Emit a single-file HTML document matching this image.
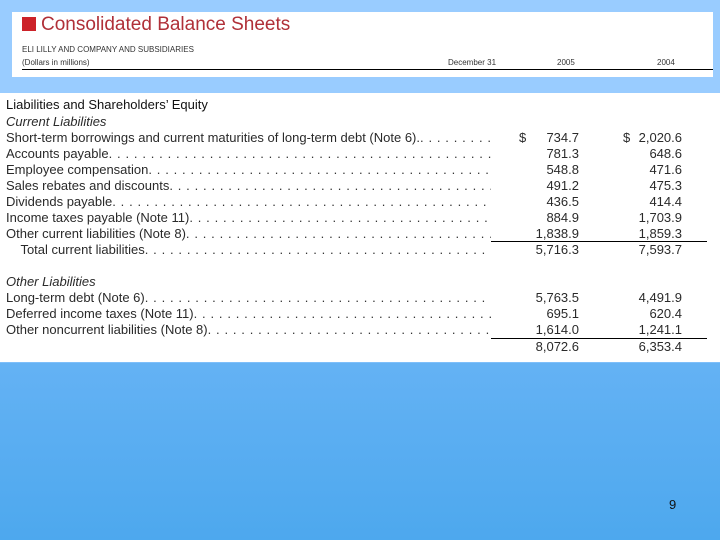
<!DOCTYPE html>
<html><head><style>
body{margin:0;width:720px;height:540px;overflow:hidden;position:relative;font-family:"Liberation Sans",sans-serif;color:#2a2a2a;
background:linear-gradient(#99ccff 0,#99ccff 362px,#64b2f4 363px,#4da8ee 540px);}
.box1{position:absolute;left:12px;top:12px;width:701px;height:65px;background:#fff}
.box2{position:absolute;left:0;top:93px;width:720px;height:269px;background:#fff}
.a{position:absolute;white-space:nowrap}
.row{position:absolute;left:6px;width:485px;display:flex;font-size:13px;height:16px;line-height:16px;white-space:nowrap}
.row .d{flex:1;overflow:hidden;letter-spacing:0.6px;color:#333}
.n{position:absolute;font-size:13px;line-height:16px;text-align:right;width:80px}
.c1{left:499px}.c2{left:602px}
.ln{position:absolute;height:1px;background:#000}
</style></head><body>
<div class="box1"></div>
<div class="box2"></div>
<div class="a" style="left:22px;top:17px;width:14px;height:14px;background:#cc2229"></div>
<div class="a" style="left:41px;top:14px;font-size:19px;color:#b03038">Consolidated Balance Sheets</div>
<div class="a" style="left:22px;top:45px;font-size:8px;color:#333">ELI LILLY AND COMPANY AND SUBSIDIARIES</div>
<div class="a" style="left:22px;top:58px;font-size:8px;color:#333">(Dollars in millions)</div>
<div class="a" style="left:448px;top:58px;font-size:8px;color:#333">December 31</div>
<div class="a" style="left:557px;top:58px;font-size:8px;color:#333">2005</div>
<div class="a" style="left:657px;top:58px;font-size:8px;color:#333">2004</div>
<div class="ln" style="left:22px;top:69px;width:691px"></div>
<div class="a" style="left:6px;top:97px;font-size:13px;color:#111">Liabilities and Shareholders’ Equity</div>
<div class="a" style="left:6px;top:114px;font-size:13px;font-style:italic">Current Liabilities</div>

<div class="row" style="top:130px"><span>Short-term borrowings and current maturities of long-term debt (Note 6).</span><span class="d">. . . . . . . . . . . . . . . . . . . . . . . . . . . . . . . . . . . . . . . . . . . . . . . . . . . . . . . . . . . . . . . . . . . . . .</span></div>
<div class="row" style="top:146px"><span>Accounts payable</span><span class="d">. . . . . . . . . . . . . . . . . . . . . . . . . . . . . . . . . . . . . . . . . . . . . . . . . . . . . . . . . . . . . . . . . . . . . . . . . . . . . . . . . . . . .</span></div>
<div class="row" style="top:162px"><span>Employee compensation</span><span class="d">. . . . . . . . . . . . . . . . . . . . . . . . . . . . . . . . . . . . . . . . . . . . . . . . . . . . . . . . . . . . . . . . . . . . . . . . . . . . . . . . . . . . .</span></div>
<div class="row" style="top:178px"><span>Sales rebates and discounts</span><span class="d">. . . . . . . . . . . . . . . . . . . . . . . . . . . . . . . . . . . . . . . . . . . . . . . . . . . . . . . . . . . . . . . . . . . . . . . . . . . . . . . . . . . . .</span></div>
<div class="row" style="top:194px"><span>Dividends payable </span><span class="d">. . . . . . . . . . . . . . . . . . . . . . . . . . . . . . . . . . . . . . . . . . . . . . . . . . . . . . . . . . . . . . . . . . . . . . . . . . . . . . . . . . . . .</span></div>
<div class="row" style="top:210px"><span>Income taxes payable (Note 11) </span><span class="d">. . . . . . . . . . . . . . . . . . . . . . . . . . . . . . . . . . . . . . . . . . . . . . . . . . . . . . . . . . . . . . . . . . . . . . . . . . . . . . . . . . . . .</span></div>
<div class="row" style="top:226px"><span>Other current liabilities (Note 8) </span><span class="d">. . . . . . . . . . . . . . . . . . . . . . . . . . . . . . . . . . . . . . . . . . . . . . . . . . . . . . . . . . . . . . . . . . . . . . . . . . . . . . . . . . . . .</span></div>
<div class="row" style="top:242px"><span>&nbsp;&nbsp;&nbsp;&nbsp;Total current liabilities</span><span class="d">. . . . . . . . . . . . . . . . . . . . . . . . . . . . . . . . . . . . . . . . . . . . . . . . . . . . . . . . . . . . . . . . . . . . . . . . . . . . . . . . . . . . .</span></div>

<div class="a" style="left:6px;top:274px;font-size:13px;font-style:italic">Other Liabilities</div>
<div class="row" style="top:290px"><span>Long-term debt (Note 6)</span><span class="d">. . . . . . . . . . . . . . . . . . . . . . . . . . . . . . . . . . . . . . . . . . . . . . . . . . . . . . . . . . . . . . . . . . . . . . . . . . . . . . . . . . . . .</span></div>
<div class="row" style="top:306px"><span>Deferred income taxes (Note 11) </span><span class="d">. . . . . . . . . . . . . . . . . . . . . . . . . . . . . . . . . . . . . . . . . . . . . . . . . . . . . . . . . . . . . . . . . . . . . . . . . . . . . . . . . . . . .</span></div>
<div class="row" style="top:322px"><span>Other noncurrent liabilities (Note 8) </span><span class="d">. . . . . . . . . . . . . . . . . . . . . . . . . . . . . . . . . . . . . . . . . . . . . . . . . . . . . . . . . . . . . . . . . . . . . . . . . . . . . . . . . . . . .</span></div>

<div class="a" style="left:519px;top:130px;font-size:13px;line-height:16px">$</div>
<div class="a" style="left:623px;top:130px;font-size:13px;line-height:16px">$</div>
<div class="n c1" style="top:130px">734.7</div><div class="n c2" style="top:130px">2,020.6</div>
<div class="n c1" style="top:146px">781.3</div><div class="n c2" style="top:146px">648.6</div>
<div class="n c1" style="top:162px">548.8</div><div class="n c2" style="top:162px">471.6</div>
<div class="n c1" style="top:178px">491.2</div><div class="n c2" style="top:178px">475.3</div>
<div class="n c1" style="top:194px">436.5</div><div class="n c2" style="top:194px">414.4</div>
<div class="n c1" style="top:210px">884.9</div><div class="n c2" style="top:210px">1,703.9</div>
<div class="n c1" style="top:226px">1,838.9</div><div class="n c2" style="top:226px">1,859.3</div>
<div class="ln" style="left:491px;top:241px;width:216px"></div>
<div class="n c1" style="top:242px">5,716.3</div><div class="n c2" style="top:242px">7,593.7</div>
<div class="n c1" style="top:290px">5,763.5</div><div class="n c2" style="top:290px">4,491.9</div>
<div class="n c1" style="top:306px">695.1</div><div class="n c2" style="top:306px">620.4</div>
<div class="n c1" style="top:322px">1,614.0</div><div class="n c2" style="top:322px">1,241.1</div>
<div class="ln" style="left:491px;top:338px;width:216px"></div>
<div class="n c1" style="top:339px">8,072.6</div><div class="n c2" style="top:339px">6,353.4</div>

<div class="a" style="left:669px;top:497px;font-size:13px;color:#111">9</div>
</body></html>
